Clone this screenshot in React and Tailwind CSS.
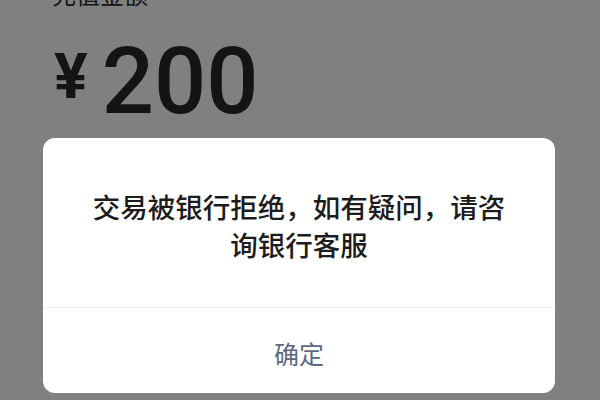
export default function App() {
  return (
    <div
      className="w-[600px] h-[400px] bg-[#808080] overflow-hidden"
      style={{ fontFamily: '"Noto Sans CJK SC", "Noto Sans", sans-serif' }}
    >
      <div className="-mt-[18px] pl-[52px] text-[24px] leading-[24px] text-[#141414]">
        充值金额
      </div>

      <div
        className="mt-[30px] pl-[54px] flex items-center text-[#141414]"
        style={{ fontFamily: 'Roboto, "Noto Sans", sans-serif' }}
      >
        <span className="text-[63px] leading-none font-bold mb-[12px]">¥</span>
        <span className="ml-[14px] text-[92px] leading-none font-medium">200</span>
      </div>

      <div className="mt-[10px] ml-[43px] w-[512px] bg-white rounded-[12px] overflow-hidden">
        <div className="px-[44px] pt-[49px] pb-[44px] text-center text-[27.5px] leading-[38px] font-medium text-[#1c1c1c]">
          交易被银行拒绝，如有疑问，请咨询银行客服
        </div>
        <div className="border-t border-[#efefef] h-[86px] pt-[6px] flex items-center justify-center text-[25px] text-[#5a6880]">
          确定
        </div>
      </div>
    </div>
  );
}
